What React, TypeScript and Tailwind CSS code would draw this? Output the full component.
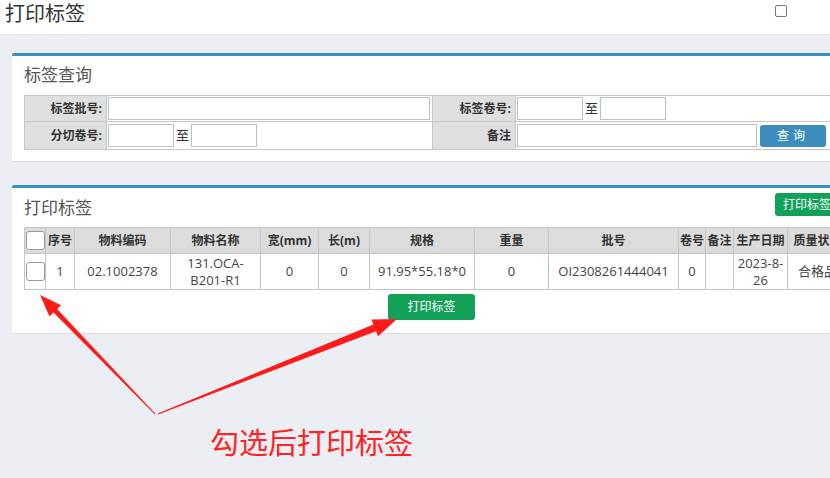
const font = { fontFamily: '"Open Sans", "Noto Sans CJK SC", sans-serif' };

type Row = {
  no: number;
  code: string;
  name: string;
  width: string;
  length: string;
  spec: string;
  weight: string;
  batch: string;
  roll: string;
  remark: string;
  date: string;
  status: string;
};

const rows: Row[] = [
  {
    no: 1,
    code: "02.1002378",
    name: "131.OCA-B201-R1",
    width: "0",
    length: "0",
    spec: "91.95*55.18*0",
    weight: "0",
    batch: "OI2308261444041",
    roll: "0",
    remark: "",
    date: "2023-8-26",
    status: "合格品",
  },
];

const columns = [
  { label: "序号", w: "w-[29px]" },
  { label: "物料编码", w: "w-[96px]" },
  { label: "物料名称", w: "w-[90px]" },
  { label: "宽(mm)", w: "w-[58px]" },
  { label: "长(m)", w: "w-[51px]" },
  { label: "规格", w: "w-[105px]" },
  { label: "重量", w: "w-[74px]" },
  { label: "批号", w: "w-[130px]" },
  { label: "卷号", w: "w-[27px]" },
  { label: "备注", w: "w-[28px]" },
  { label: "生产日期", w: "w-[54px]" },
  { label: "质量状态", w: "w-[60px]" },
];

function Box() {
  return (
    <span className="block w-[19px] h-[19px] mx-auto rounded-[3px] border border-[#9a9a9a] bg-white" />
  );
}

function TextInput({ w }: { w: string }) {
  return (
    <input
      className={`${w} h-[23px] border border-[#bfbfbf] bg-white outline-none`}
      type="text"
    />
  );
}

function SearchPanel() {
  const label =
    "bg-[#dfdfdf] border border-[#c6c6c6] text-right pr-[4px] text-[12px] font-bold text-[#333] whitespace-nowrap";
  const cell = "border border-[#c6c6c6] px-[1px]";
  return (
    <div className="bg-white border-t-[3px] border-[#3d8fc1] rounded-[2px] shadow-[0_1px_1px_rgba(0,0,0,0.08)] px-[12px] pt-[5px] pb-[11px]">
      <div className="flex justify-between items-center">
        <h3 className="text-[17px] leading-[28px] text-[#555]">标签查询</h3>
        <span className="text-[9px] text-[#3d8fc1] -mr-[8px]">≡</span>
      </div>
      <table className="mt-[6px] w-full border-collapse table-fixed">
        <tbody>
          <tr className="h-[26px]">
            <td className={`${label} w-[82px]`}>标签批号:</td>
            <td className={`${cell} w-[326px]`}>
              <TextInput w="w-[322px]" />
            </td>
            <td className={`${label} w-[83px]`}>标签卷号:</td>
            <td className={cell}>
              <div className="flex items-center">
                <TextInput w="w-[66px]" />
                <span className="text-[13px] text-[#333] px-[2px]">至</span>
                <TextInput w="w-[66px]" />
              </div>
            </td>
          </tr>
          <tr className="h-[28px]">
            <td className={label}>分切卷号:</td>
            <td className={cell}>
              <div className="flex items-center">
                <TextInput w="w-[66px]" />
                <span className="text-[13px] text-[#333] px-[2px]">至</span>
                <TextInput w="w-[66px]" />
              </div>
            </td>
            <td className={label}>备注</td>
            <td className={cell}>
              <div className="flex items-center gap-[3px]">
                <TextInput w="w-[240px]" />
                <button className="w-[66px] h-[22px] rounded-[3px] bg-[#3c8dbc] text-white text-[12px] tracking-[4px]">
                  查询
                </button>
              </div>
            </td>
          </tr>
        </tbody>
      </table>
    </div>
  );
}

function PrintPanel() {
  const th =
    "border border-[#c4c4c4] bg-[#dcdcdc] text-[12px] font-bold text-[#333] text-center whitespace-nowrap overflow-hidden";
  const td =
    "border border-[#c4c4c4] text-[13px] leading-[17px] text-[#444] text-center px-[2px] overflow-hidden";
  return (
    <div className="bg-white border-t-[3px] border-[#3d8fc1] rounded-[2px] shadow-[0_1px_1px_rgba(0,0,0,0.08)] px-[12px] pt-[5px] pb-[13px]">
      <div className="flex justify-between items-start h-[34px]">
        <h3 className="mt-[1px] text-[17px] leading-[28px] text-[#555]">打印标签</h3>
        <button className="h-[23px] px-[8px] rounded-[3px] bg-[#13a15a] text-white text-[12px]">
          打印标签
        </button>
      </div>
      <table className="w-full border-collapse table-fixed">
        <thead>
          <tr className="h-[26px]">
            <th className={`${th} w-[21px]`}>
              <Box />
            </th>
            {columns.map((c) => (
              <th key={c.label} className={`${th} ${c.w}`}>
                {c.label}
              </th>
            ))}
          </tr>
        </thead>
        <tbody>
          {rows.map((r) => (
            <tr key={r.no} className="h-[36px]">
              <td className="border border-[#c4c4c4]">
                <Box />
              </td>
              <td className={td}>{r.no}</td>
              <td className={td}>{r.code}</td>
              <td className={td}>{r.name}</td>
              <td className={td}>{r.width}</td>
              <td className={td}>{r.length}</td>
              <td className={td}>{r.spec}</td>
              <td className={td}>{r.weight}</td>
              <td className={td}>{r.batch}</td>
              <td className={td}>{r.roll}</td>
              <td className={td}>{r.remark}</td>
              <td className={td}>{r.date}</td>
              <td className={`${td} whitespace-nowrap`}>{r.status}</td>
            </tr>
          ))}
        </tbody>
      </table>
      <div className="flex justify-center mt-[4px]">
        <button className="w-[87px] h-[26px] rounded-[3px] bg-[#13a15a] text-white text-[12px]">
          打印标签
        </button>
      </div>
    </div>
  );
}

// red callout arrows pointing at the row checkbox and the print button
function Callout() {
  return (
    <>
      <svg className="absolute left-0 top-0 pointer-events-none" width="830" height="478">
        <polygon
          fill="#ff1a1a"
          points="155.4,413.7 57.1,309.1 61.1,305.2 40,295 49.5,316.4 53.5,312.5 154.6,414.3"
        />
        <polygon
          fill="#ff1a1a"
          points="158.2,414.5 376,331.2 378,336.3 397,319 371.4,319.5 373.4,324.6 157.8,413.5"
        />
      </svg>
      <span className="absolute left-[210px] top-[424px] text-[29px] leading-[38px] text-[#ff2222]">
        勾选后打印标签
      </span>
    </>
  );
}

export default function App() {
  return (
    <div className="relative w-[830px] h-[478px] overflow-hidden bg-[#ebeef2]" style={font}>
      <header className="h-[35px] bg-white border-b border-[#e3e6ea] flex items-center justify-between pl-[5px] pr-[43px]">
        <h1 className="text-[20px] leading-[28px] text-[#333] -mt-[6px]">打印标签</h1>
        <span className="w-[12px] h-[12px] rounded-[2px] border-[1.5px] border-[#777] -mt-[12px]" />
      </header>
      <div className="w-[839px] ml-[12px] mt-[18px] flex flex-col gap-[24px]">
        <SearchPanel />
        <PrintPanel />
      </div>
      <Callout />
    </div>
  );
}
